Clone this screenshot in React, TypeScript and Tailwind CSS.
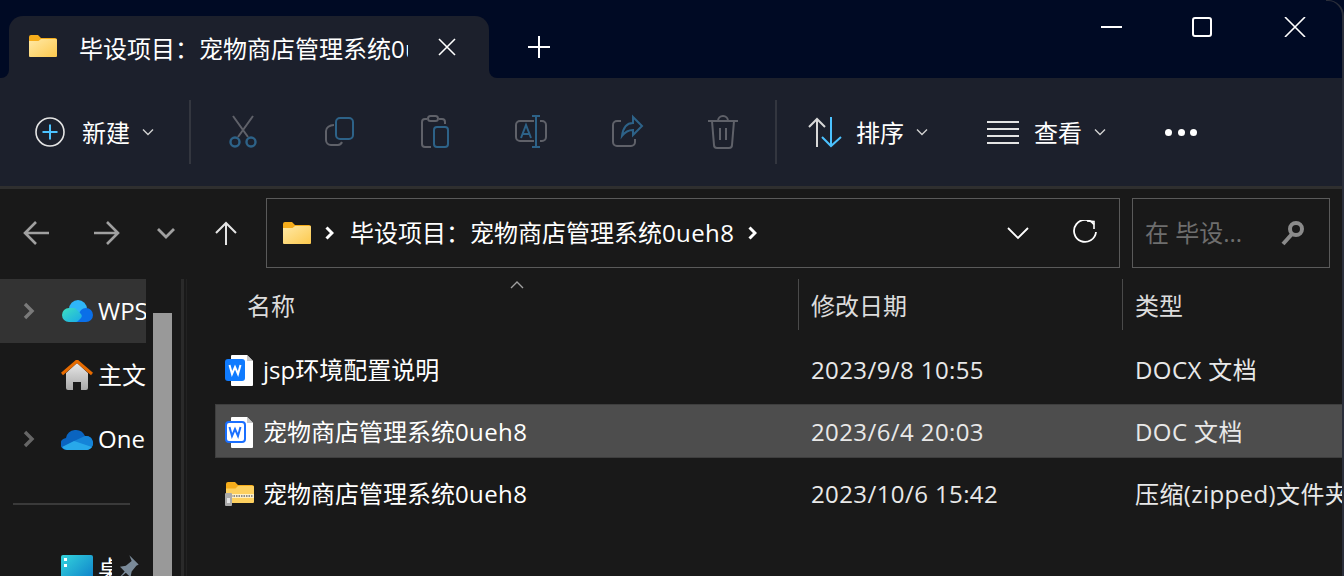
import React from "react";

const FONT = "font-['Open_Sans','Noto_Sans_CJK_SC',sans-serif]";

function Title({ colon = "\uFF1A" }: { colon?: string }) {
  return (
    <>
      毕设项目{colon}宠物商店管理系统<span className="tracking-[0.4px]">0ueh8</span>
    </>
  );
}

function Folder({ w = 28, h = 22 }: { w?: number; h?: number }) {
  return (
    <svg width={w} height={h} viewBox="0 0 28 22" className="shrink-0">
      <defs>
        <linearGradient id="fg" x1="0" y1="0" x2="1" y2="1">
          <stop offset="0" stopColor="#ffe9a6" />
          <stop offset="1" stopColor="#fcc94e" />
        </linearGradient>
      </defs>
      <path d="M0 2a2 2 0 0 1 2-2h7l3 3h14a2 2 0 0 1 2 2v3H0z" fill="#f6ad1b" />
      <path d="M0 21a1 1 0 0 0 1 1h26a1 1 0 0 0 1-1V5a1 1 0 0 0-1-1H12L9.500 6H0z" fill="url(#fg)" />
    </svg>
  );
}

function ZipFolder() {
  return (
    <svg width="29" height="24" viewBox="0 0 29 24">
      <path d="M1 2a2 2 0 0 1 2-2h7l3 3h14a2 2 0 0 1 2 2v3H1z" fill="#f6ad1b" />
      <path d="M1 20a1 1 0 0 0 1 1h26a1 1 0 0 0 1-1V5a1 1 0 0 0-1-1H13l-2.500 2.500H1z" fill="#fdd05f" />
      <rect x="1" y="12" width="28" height="4" fill="#fff0c4" />
      <path d="M6 14h22" stroke="#8d8d8d" strokeWidth="2" strokeDasharray="1.500 1" />
      <rect x="0" y="11" width="7" height="13" rx="1" fill="#a9a9a9" />
      <rect x="2" y="16" width="3" height="5" fill="#e3e3e3" />
    </svg>
  );
}

function WordIcon({ outlined }: { outlined?: boolean }) {
  return (
    <svg width="29" height="31" viewBox="0 0 29 31">
      <path d="M6 1a1 1 0 0 1 1-1h15l6 6v24a1 1 0 0 1-1 1H7a1 1 0 0 1-1-1z" fill="#ffffff" />
      <path d="M22 0l6 6h-6z" fill="#c9c9c9" />
      {outlined ? (
        <rect x="1" y="5" width="19" height="20" rx="3" fill="#ffffff" stroke="#1a6fff" strokeWidth="2" />
      ) : (
        <rect x="0" y="4" width="20" height="22" rx="3" fill="#0f7bff" />
      )}
      <path d="M4.500 10l2.500 9 3-7 3 7 2.500-9" fill="none" stroke={outlined ? "#1a6fff" : "#ffffff"} strokeWidth="2" />
    </svg>
  );
}

function Chevron({ className = "" }: { className?: string }) {
  return (
    <svg width="12" height="8" viewBox="0 0 12 8" className={className}>
      <path d="M1 1.500l5 5 5-5" fill="none" stroke="#d0d0d0" strokeWidth="1.400" />
    </svg>
  );
}

function ToolIcon({ children }: { children: React.ReactNode }) {
  return (
    <div className="flex w-[96px] items-center justify-center">
      <svg width="36" height="36" viewBox="0 0 36 36" fill="none" strokeWidth="2">
        {children}
      </svg>
    </div>
  );
}

const GREY = "#5f6169";
const BLUE = "#2d6288";

function Toolbar() {
  return (
    <div className="flex h-[108px] items-center bg-[#1c202c] pl-[35px]">
      <svg width="30" height="30" viewBox="0 0 30 30" fill="none">
        <circle cx="15" cy="15" r="14" stroke="#e4e4e4" strokeWidth="1.600" />
        <path d="M15 7.500v15M7.500 15h15" stroke="#4cc2ff" strokeWidth="2" />
      </svg>
      <span className="ml-[17px] mt-[2px] text-[24px] leading-none text-white">新建</span>
      <Chevron className="ml-[12px]" />
      <div className="ml-[35px] mr-[4px] h-[64px] w-[2px] bg-[#33363f]" />
      <ToolIcon>
        <path d="M8 2l15 21M28 2L13 23" stroke={GREY} />
        <circle cx="10" cy="28" r="4.500" stroke={BLUE} strokeWidth="2.400" />
        <circle cx="26" cy="28" r="4.500" stroke={BLUE} strokeWidth="2.400" />
      </ToolIcon>
      <ToolIcon>
        <path d="M13 11a8 6 0 0 0-8 6v9a5 5 0 0 0 5 5h7a5 5 0 0 0 4-3" stroke={GREY} />
        <rect x="15" y="4" width="17" height="21" rx="4" stroke={BLUE} />
      </ToolIcon>
      <ToolIcon>
        <path d="M10 5H8a3 3 0 0 0-3 3v22a3 3 0 0 0 3 3h6M22 5h3a3 3 0 0 1 3 3v2" stroke={GREY} />
        <rect x="11" y="2" width="10" height="5" rx="2.500" stroke={GREY} />
        <rect x="17" y="13" width="14" height="20" rx="3" stroke={BLUE} />
      </ToolIcon>
      <ToolIcon>
        <path d="M21 7H7a4 4 0 0 0-4 4v12a4 4 0 0 0 4 4h14M27 7h2a4 4 0 0 1 4 4v12a4 4 0 0 1-4 4h-2" stroke={GREY} />
        <path d="M23 2v32M19 2h8M19 33h8" stroke={BLUE} />
        <path d="M8 24l5-13 5 13M10 20h6" stroke={BLUE} />
      </ToolIcon>
      <ToolIcon>
        <path d="M12 7H8a4 4 0 0 0-4 4v17a4 4 0 0 0 4 4h14a4 4 0 0 0 4-4v-3" stroke={GREY} />
        <path d="M24 3l9 9-9 9v-5c-5 0-8 2-11 6 1-8 5-13 11-13z" stroke={BLUE} />
      </ToolIcon>
      <ToolIcon>
        <path d="M3 7h30M7 7l2 24a3 3 0 0 0 3 3h12a3 3 0 0 0 3-3l2-24M13 7a5 5 0 0 1 10 0M15 14v12M21 14v12" stroke={GREY} />
      </ToolIcon>
      <div className="ml-[4px] h-[64px] w-[2px] bg-[#33363f]" />
      <svg width="34" height="32" viewBox="0 0 34 32" fill="none" strokeWidth="2" className="ml-[31px]">
        <path d="M9 31V3M1 11l8-8 8 8" stroke="#d8d8d8" />
        <path d="M23 1v29M14 21l9 9 10-9" stroke="#4cc2ff" />
      </svg>
      <span className="ml-[14px] mt-[2px] text-[24px] leading-none text-white">排序</span>
      <Chevron className="ml-[12px]" />
      <svg width="32" height="26" viewBox="0 0 32 26" className="ml-[59px]" fill="none" stroke="#e4e4e4" strokeWidth="2">
        <path d="M0 3h32M0 10h32M0 17h32M0 24h32" />
      </svg>
      <span className="ml-[15px] mt-[2px] text-[24px] leading-none text-white">查看</span>
      <Chevron className="ml-[12px]" />
      <div className="ml-[59px] flex gap-[5.5px]">
        <div className="h-[7px] w-[7px] rounded-full bg-white" />
        <div className="h-[7px] w-[7px] rounded-full bg-white" />
        <div className="h-[7px] w-[7px] rounded-full bg-white" />
      </div>
    </div>
  );
}

function TitleBar() {
  return (
    <div className="flex h-[78px] bg-[#1c202c]">
      <div className="w-[9px] rounded-br-[8px] bg-[#000a24]" />
      <div className="bg-[#000a24] pt-[16px]">
        <div className="flex h-[62px] w-[480px] items-start rounded-t-[14px] bg-[#1c202c] pl-[20px] pt-[19px]">
          <Folder />
          <span className="ml-[22px] h-[30px] w-[329px] overflow-hidden whitespace-nowrap text-[24px] leading-[28px] text-white">
            <Title />
          </span>
          <svg width="18" height="18" viewBox="0 0 18 18" className="ml-[30px] mt-[3px]" stroke="#fff" strokeWidth="1.600">
            <path d="M1 1l16 16M17 1L1 17" />
          </svg>
        </div>
      </div>
      <div className="flex flex-1 justify-between rounded-bl-[8px] bg-[#000a24] pl-[39px] pr-[38px]">
        <svg width="22" height="22" viewBox="0 0 22 22" className="mt-[36px]" stroke="#fff" strokeWidth="2">
          <path d="M11 0v22M0 11h22" />
        </svg>
        <div className="flex items-start">
          <div className="mt-[26px] h-[2px] w-[21px] bg-white" />
          <div className="ml-[70px] mt-[17px] h-[20px] w-[20px] rounded-[3px] border-2 border-white" />
          <svg width="22" height="20" viewBox="0 0 22 20" className="ml-[72px] mt-[17px]" stroke="#fff" strokeWidth="1.600">
            <path d="M1 0l20 20M21 0L1 20" />
          </svg>
        </div>
      </div>
    </div>
  );
}

function AddressRow() {
  return (
    <div className="flex h-[93px] items-start border-t-[3px] border-[#2f2f2f] pl-[23px] pt-[9px]">
      <div className="flex h-[70px] w-[243px] items-center">
        <svg width="26" height="24" viewBox="0 0 26 24" fill="none" stroke="#a0a0a0" strokeWidth="2.600">
          <path d="M26 12H2M13 1L2 12l11 11" />
        </svg>
        <svg width="26" height="24" viewBox="0 0 26 24" fill="none" stroke="#a0a0a0" strokeWidth="2.600" className="ml-[45px]">
          <path d="M0 12h24M13 1l11 11-11 11" />
        </svg>
        <svg width="18" height="11" viewBox="0 0 18 11" fill="none" stroke="#a0a0a0" strokeWidth="2.800" className="ml-[37px]">
          <path d="M1 1l8 8 8-8" />
        </svg>
        <svg width="22" height="24" viewBox="0 0 22 24" fill="none" stroke="#e4e4e4" strokeWidth="2" className="ml-[40px]">
          <path d="M11 24V2M1 12L11 2l10 10" />
        </svg>
      </div>
      <div className="flex h-[70px] w-[854px] items-center border border-[#5a5a5a] pl-[16px]">
        <Folder />
        <svg width="9" height="14" viewBox="0 0 9 14" fill="none" stroke="#fff" strokeWidth="3" className="ml-[14px]">
          <path d="M1.500 1.500L7 7l-5.500 5.500" />
        </svg>
        <span className="ml-[16px] text-[24px] leading-none whitespace-nowrap text-white">
          <Title />
        </span>
        <svg width="9" height="14" viewBox="0 0 9 14" fill="none" stroke="#fff" strokeWidth="3" className="ml-[14px]">
          <path d="M1.500 1.500L7 7l-5.500 5.500" />
        </svg>
        <div className="flex-1" />
        <svg width="22" height="13" viewBox="0 0 22 13" fill="none" stroke="#fff" strokeWidth="1.800" className="mr-[44px]">
          <path d="M1 1l10 10L21 1" />
        </svg>
        <svg width="24" height="24" viewBox="0 0 24 24" fill="none" stroke="#fff" strokeWidth="1.800" className="mb-[3px] mr-[22px]">
          <path d="M21 4.500A11 11 0 1 0 23 12" />
          <path d="M14 1l7 .500V9" strokeWidth="1.600" />
        </svg>
      </div>
      <div className="ml-[12px] flex h-[70px] w-[198px] items-center border border-[#5a5a5a] pl-[12px]">
        <span className="text-[24px] leading-none text-[#6e6e6e]">在 毕设...</span>
        <div className="flex-1" />
        <svg width="24" height="26" viewBox="0 0 24 26" fill="none" className="mr-[24px]">
          <circle cx="15" cy="9" r="6" stroke="#8b8b8b" strokeWidth="4" />
          <path d="M11 14L2 24" stroke="#8b8b8b" strokeWidth="4" />
        </svg>
      </div>
    </div>
  );
}

function Sidebar() {
  return (
    <div className="flex w-[187px] shrink-0">
      <div className="flex w-[146px] shrink-0 flex-col overflow-hidden">
        <div className="flex h-[64px] shrink-0 items-center bg-[#333333] pl-[23px]">
          <svg width="12" height="18" viewBox="0 0 12 18" fill="none" stroke="#7a7a7a" strokeWidth="3.400" className="shrink-0">
            <path d="M2 2l7 7-7 7" />
          </svg>
          <svg width="31" height="22" viewBox="0 0 31 22" className="ml-[27px] shrink-0">
            <defs>
              <linearGradient id="wps2" x1="0" y1="0" x2="1" y2="1">
                <stop offset="0" stopColor="#3de0c0" />
                <stop offset="1" stopColor="#19a9e8" />
              </linearGradient>
            </defs>
            <circle cx="16" cy="9" r="9" fill="#2fb6f8" />
            <circle cx="24" cy="15" r="7" fill="#0a6fe8" />
            <path d="M14 22h10v-8h-10z" fill="#0a6fe8" />
            <path d="M7 8h5a3 3 0 0 1 2 1l5 5a3 3 0 0 1 0 4l-3 3a3 3 0 0 1-2 1H7A7 7 0 0 1 7 8z" fill="url(#wps2)" />
          </svg>
          <span className="ml-[5px] text-[24px] leading-none whitespace-nowrap text-white">WPS网盘</span>
        </div>
        <div className="flex h-[64px] shrink-0 items-center pl-[61px]">
          <svg width="32" height="30" viewBox="0 0 32 30" className="shrink-0">
            <defs>
              <linearGradient id="hm" x1="0" y1="0" x2="0" y2="1">
                <stop offset="0" stopColor="#e8e8e8" />
                <stop offset="1" stopColor="#a8a8a8" />
              </linearGradient>
            </defs>
            <path d="M5 13L16 3l11 10v15a2 2 0 0 1-2 2h-5v-8h-8v8H7a2 2 0 0 1-2-2z" fill="url(#hm)" />
            <path d="M1 14L16 1l15 13" fill="none" stroke="#e66b00" strokeWidth="3" />
          </svg>
          <span className="ml-[5px] text-[24px] leading-none whitespace-nowrap text-white">主文件夹</span>
        </div>
        <div className="flex h-[64px] shrink-0 items-center pl-[23px]">
          <svg width="12" height="18" viewBox="0 0 12 18" fill="none" stroke="#666666" strokeWidth="3.400" className="shrink-0">
            <path d="M2 2l7 7-7 7" />
          </svg>
          <svg width="32" height="21" viewBox="0 0 32 21" className="ml-[26px] shrink-0">
            <path d="M6 21a6 6 0 0 1-1-12 10 10 0 0 1 19-2 7 7 0 0 1 2 14z" fill="#0a64c0" />
            <path d="M24 7a7 7 0 0 1 2 14h-6l-7-9z" fill="#1584d8" />
            <path d="M6 21a6 6 0 0 1-5-3l12-6 18 6a7 7 0 0 1-5 3z" fill="#28a8ea" />
          </svg>
          <span className="ml-[5px] text-[24px] leading-none whitespace-nowrap text-white">OneDrive</span>
        </div>
        <div className="ml-[13px] mt-[32px] h-[2px] w-[117px] shrink-0 bg-[#3a3a3a]" />
        <div className="mt-[50px] flex shrink-0 items-start pl-[61px]">
          <svg width="32" height="30" viewBox="0 0 32 30" className="shrink-0">
            <defs>
              <linearGradient id="dk" x1="0" y1="0" x2="1" y2="1">
                <stop offset="0" stopColor="#34d4dc" />
                <stop offset="1" stopColor="#0a78c8" />
              </linearGradient>
            </defs>
            <rect width="32" height="30" rx="2" fill="url(#dk)" />
            <rect x="3" y="3" width="3" height="3" fill="#fff" />
            <rect x="3" y="9" width="3" height="3" fill="#fff" />
          </svg>
          <span className="ml-[5px] mt-[2px] h-[24px] w-[14px] shrink-0 overflow-hidden whitespace-nowrap text-[24px] leading-none text-white">桌面</span>
          <svg width="26" height="28" viewBox="0 0 22 24" className="ml-[2px] mt-[-1px] shrink-0">
            <path d="M13 1l8 8-2 1-4 5-1 5-4-4-8 7 7-8-4-4 5-1 5-4z" fill="#7a8a99" />
          </svg>
        </div>
      </div>
      <div className="ml-[7px] w-[19px] shrink-0 pt-[34px]">
        <div className="h-full bg-[#999999]" />
      </div>
      <div className="ml-[9px] w-[3px] shrink-0 bg-[#2a2a2a]" />
      <div className="ml-[2px] w-[1px] shrink-0 bg-[#222222]" />
    </div>
  );
}

function Row({ icon, name, date, type, selected }: { icon: React.ReactNode; name: React.ReactNode; date: string; type: string; selected?: boolean }) {
  return (
    <div
      className={
        "grid h-[54px] grid-cols-[38px_548px_324px_1fr] items-center whitespace-nowrap text-[24px] leading-none text-white " +
        (selected ? "mb-[9px] mt-[7px] border border-[#3e3e3e] bg-[#4d4d4d] pl-[9px] pt-[2px]" : "pl-[10px]")
      }
    >
      <div>{icon}</div>
      <div>{name}</div>
      <div className="tracking-[0.4px] text-[#e8e8e8]">{date}</div>
      <div className="tracking-[0.4px] text-[#e8e8e8]">{type}</div>
    </div>
  );
}

function FileName() {
  return (
    <>
      宠物商店管理系统<span className="tracking-[0.4px]">0ueh8</span>
    </>
  );
}

function FileList() {
  return (
    <div className="relative min-w-0 flex-1 overflow-hidden pl-[28px]">
      <svg width="14" height="8" viewBox="0 0 14 8" fill="none" stroke="#a0a0a0" strokeWidth="1.400" className="absolute left-[323px] top-[2px]">
        <path d="M1 7l6-6 6 6" />
      </svg>
      <div className="flex h-[61px] items-start text-[24px] text-[#dcdcdc]">
        <div className="w-[583px] pl-[32px] pt-[12px] leading-[30px]">名称</div>
        <div className="h-[51px] w-[324px] border-l border-[#4a4a4a] pl-[12px] pt-[12px] leading-[30px]">修改日期</div>
        <div className="h-[51px] flex-1 border-l border-[#4a4a4a] pl-[12px] pt-[12px] leading-[30px]">类型</div>
      </div>
      <div className="flex flex-col pt-[3px]">
        <Row icon={<WordIcon />} name="jsp环境配置说明" date="2023/9/8 10:55" type="DOCX 文档" />
        <Row icon={<WordIcon outlined />} name={<FileName />} date="2023/6/4 20:03" type="DOC 文档" selected />
        <Row icon={<ZipFolder />} name={<FileName />} date="2023/10/6 15:42" type="压缩(zipped)文件夹" />
      </div>
    </div>
  );
}

export default function App() {
  return (
    <div className={"relative flex h-[576px] w-[1344px] flex-col overflow-hidden bg-[#191919] " + FONT}>
      <TitleBar />
      <Toolbar />
      <AddressRow />
      <div className="flex min-h-0 flex-1">
        <Sidebar />
        <FileList />
      </div>
      <div className="absolute right-0 top-0 h-[18px] w-[18px] rounded-tr-[16px] border-r-2 border-t border-[#2a2e3a]" />
      <div className="absolute bottom-0 right-0 top-[18px] w-[2px] bg-[#2a2e3a]" />
    </div>
  );
}
